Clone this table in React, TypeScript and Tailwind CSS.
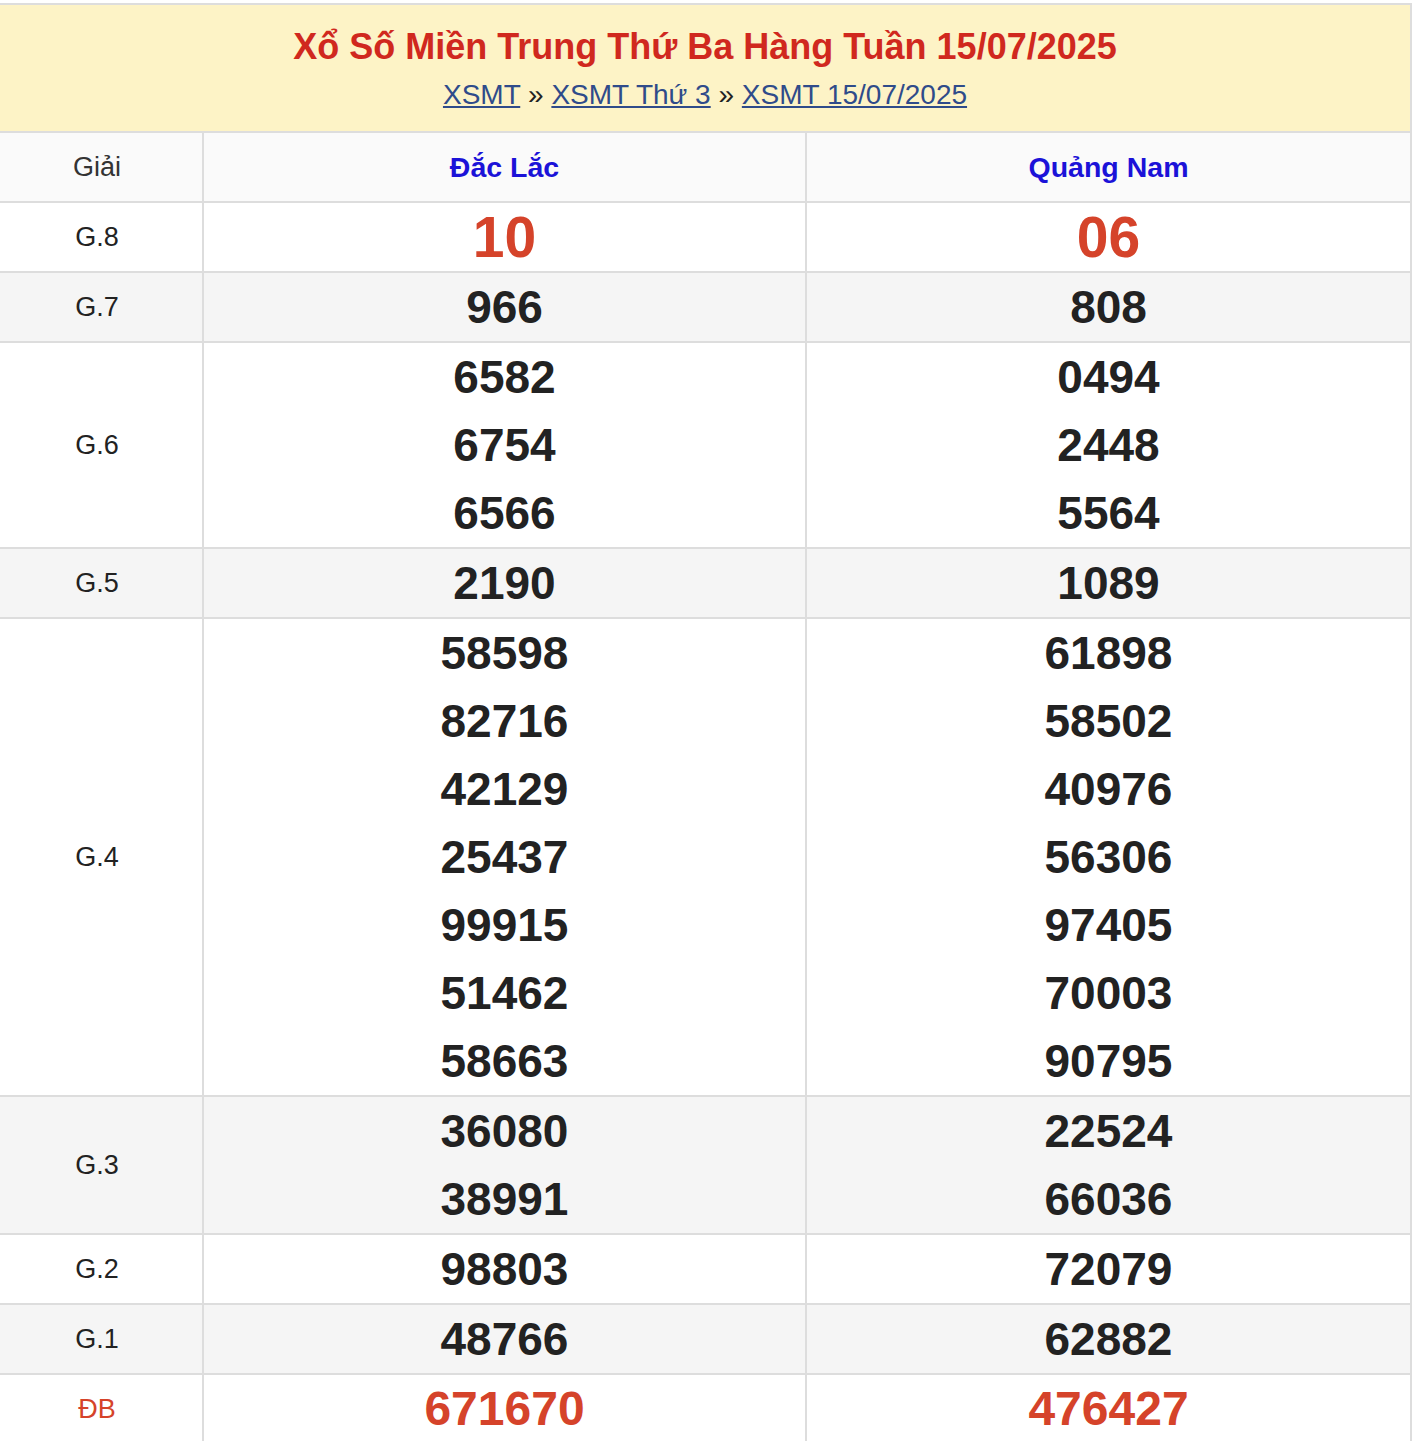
import React from "react";

type Row = { label: string; a: string[]; b: string[]; kind?: "big" | "db" };

const rows: Row[] = [
  { label: "G.8", a: ["10"], b: ["06"], kind: "big" },
  { label: "G.7", a: ["966"], b: ["808"] },
  { label: "G.6", a: ["6582", "6754", "6566"], b: ["0494", "2448", "5564"] },
  { label: "G.5", a: ["2190"], b: ["1089"] },
  {
    label: "G.4",
    a: ["58598", "82716", "42129", "25437", "99915", "51462", "58663"],
    b: ["61898", "58502", "40976", "56306", "97405", "70003", "90795"],
  },
  { label: "G.3", a: ["36080", "38991"], b: ["22524", "66036"] },
  { label: "G.2", a: ["98803"], b: ["72079"] },
  { label: "G.1", a: ["48766"], b: ["62882"] },
  { label: "ĐB", a: ["671670"], b: ["476427"], kind: "db" },
];

function Nums({ list, kind }: { list: string[]; kind?: "big" | "db" }) {
  const cls =
    kind === "big"
      ? "text-[57px] text-[#d5432a]"
      : kind === "db"
      ? "text-[48px] text-[#d5432a]"
      : "text-[46px] text-[#222222]";
  return (
    <div className="flex flex-col">
      {list.map((n, i) => (
        <div key={i} className={`h-[68px] flex items-center justify-center font-bold leading-none ${cls}`}>
          {n}
        </div>
      ))}
    </div>
  );
}

export default function App() {
  return (
    <div className="w-[1412px] bg-white pt-[3px] font-['Liberation_Sans',Arial,sans-serif]">
      <div className="border-t-2 border-r-2 border-[#dddddd]">
        <div className="h-[128px] bg-[#fdf3c6] border-b-2 border-[#dddddd] flex flex-col items-center">
          <h1 className="mt-[21px] text-[36px] leading-[42px] font-bold text-[#d0281e]">
            Xổ Số Miền Trung Thứ Ba Hàng Tuần 15/07/2025
          </h1>
          <div className="mt-[10px] text-[28px] leading-[34px] text-[#222222]">
            <a className="underline text-[#2f4b8a]">XSMT</a> »{" "}
            <a className="underline text-[#2f4b8a]">XSMT Thứ 3</a> »{" "}
            <a className="underline text-[#2f4b8a]">XSMT 15/07/2025</a>
          </div>
        </div>
        <div className="grid grid-cols-[204px_603px_1fr] bg-[#fafafa] border-b-2 border-[#dddddd] h-[70px]">
          <div className="border-r-2 border-[#dddddd] pr-[8px] flex items-center justify-center text-[27px] text-[#333333]">
            Giải
          </div>
          <div className="border-r-2 border-[#dddddd] flex items-center justify-center text-[28.5px] font-bold text-[#1b12d8]">
            Đắc Lắc
          </div>
          <div className="flex items-center justify-center text-[28.5px] font-bold text-[#1b12d8]">
            Quảng Nam
          </div>
        </div>
        {rows.map((r, i) => (
          <div
            key={r.label}
            className={`grid grid-cols-[204px_603px_1fr] ${i % 2 === 1 ? "bg-[#f5f5f5]" : "bg-white"} ${
              i < rows.length - 1 ? "border-b-2 border-[#dddddd]" : ""
            }`}
          >
            <div
              className={`border-r-2 border-[#dddddd] pr-[8px] flex items-center justify-center text-[27px] ${
                r.kind === "db" ? "text-[#d5432a]" : "text-[#222222]"
              }`}
            >
              {r.label}
            </div>
            <div className="border-r-2 border-[#dddddd]">
              <Nums list={r.a} kind={r.kind} />
            </div>
            <div>
              <Nums list={r.b} kind={r.kind} />
            </div>
          </div>
        ))}
      </div>
    </div>
  );
}
